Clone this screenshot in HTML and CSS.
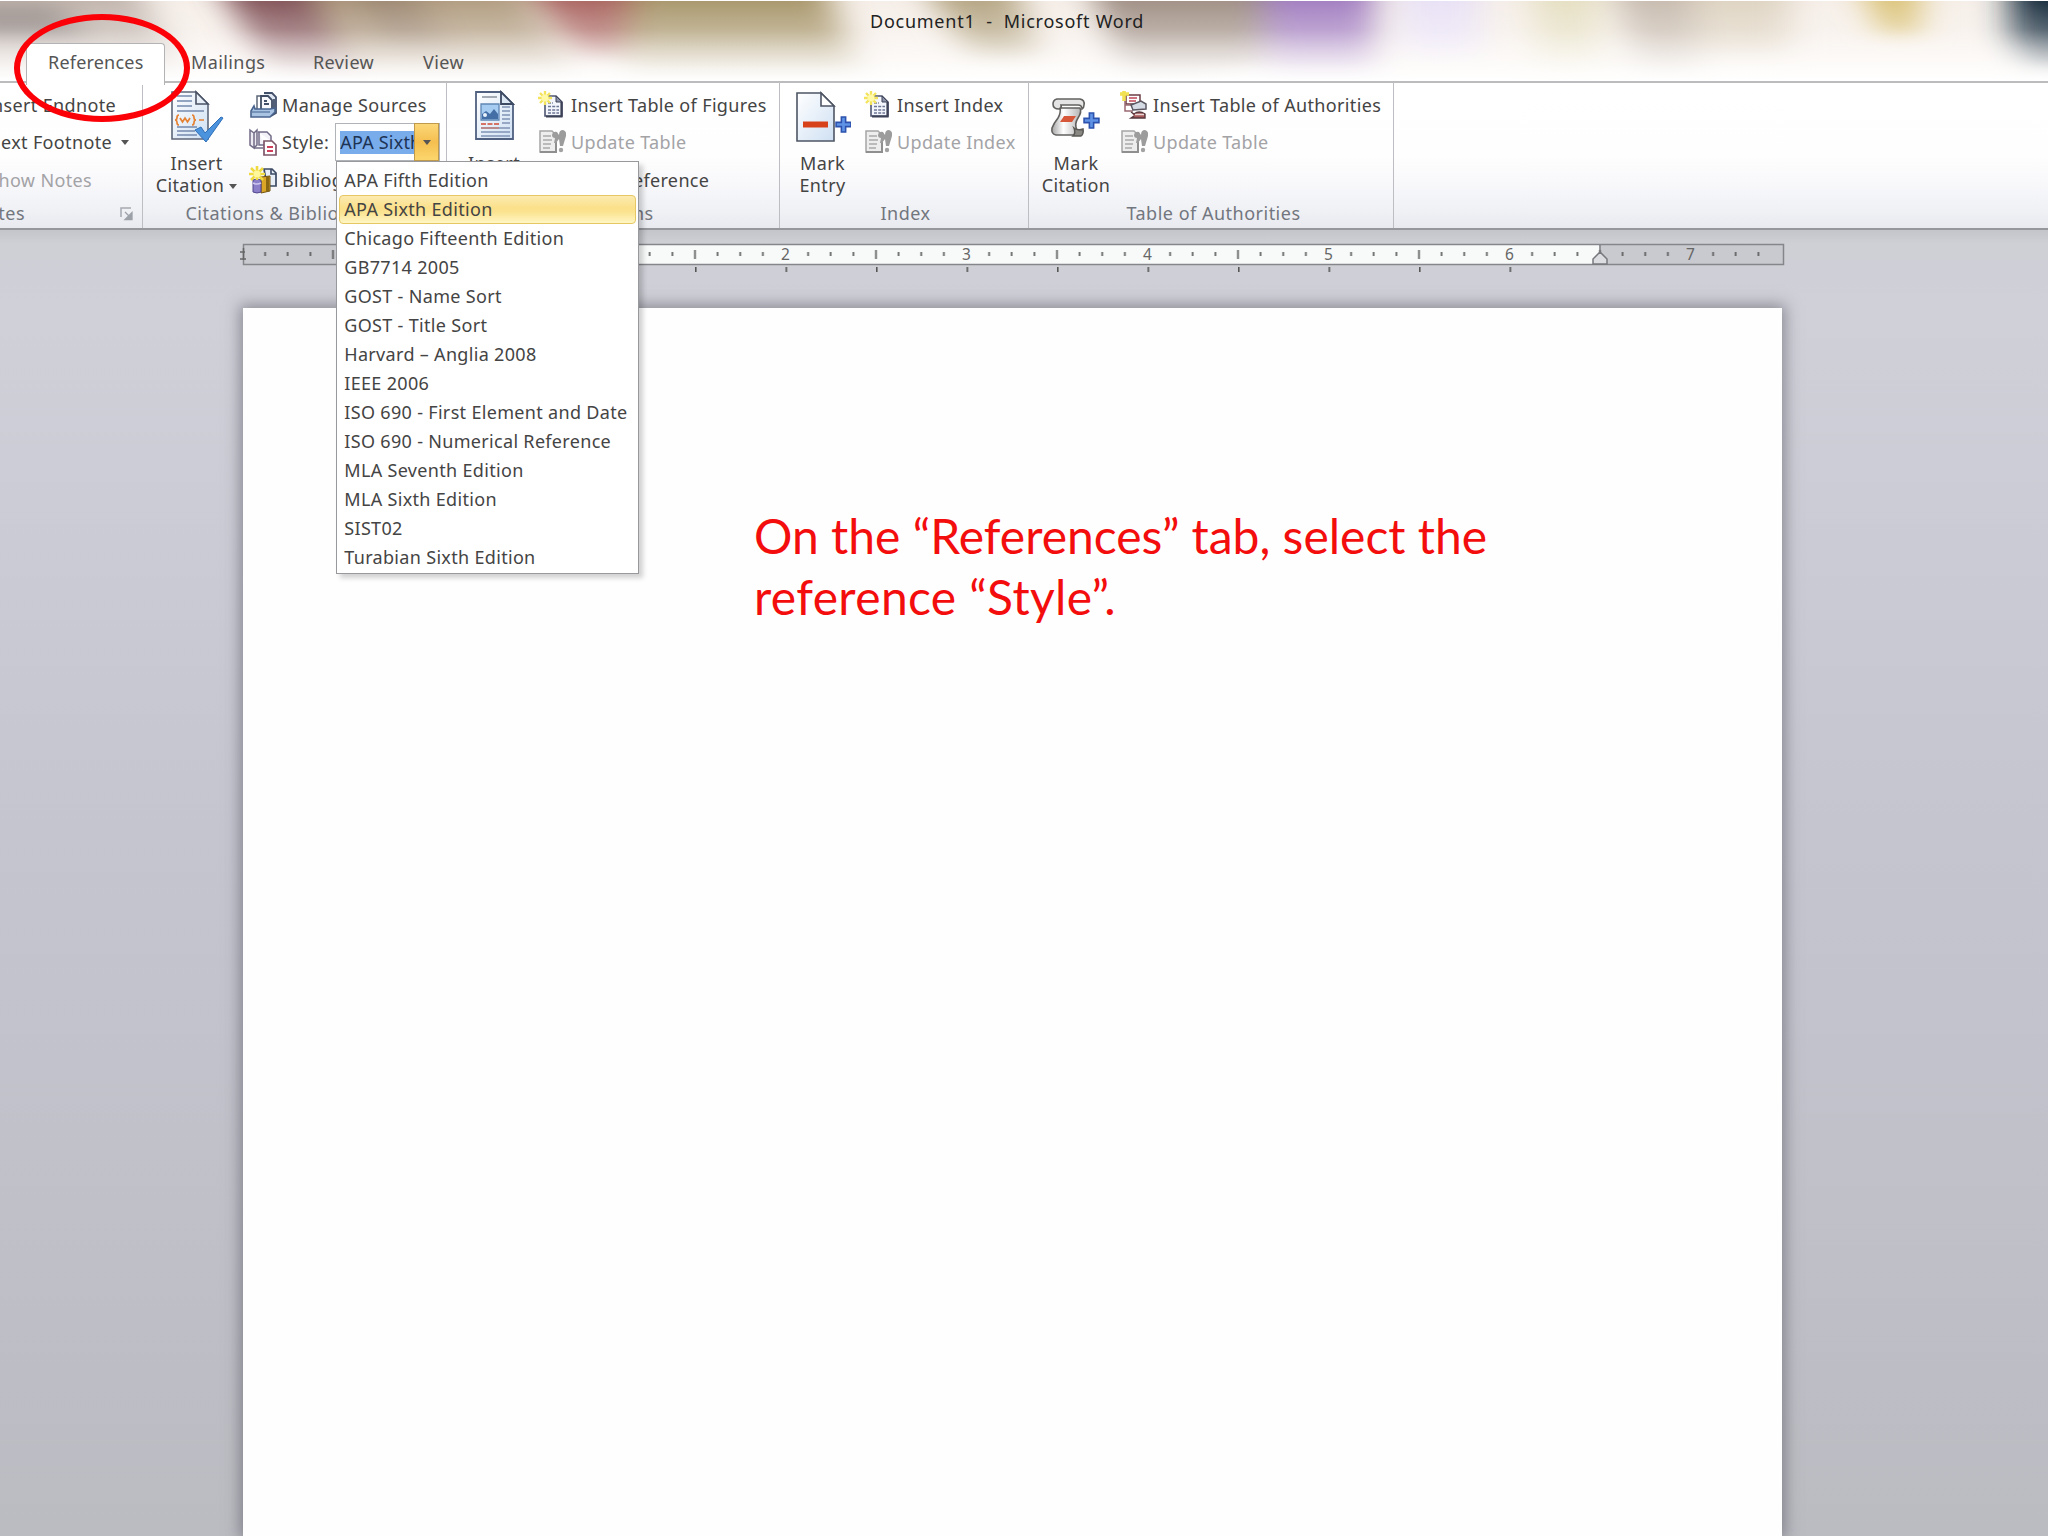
FILE: index.html
```
<!DOCTYPE html>
<html lang="en">

<head>
  <meta charset="UTF-8" />
  <title>Document1 - Microsoft Word</title>
  <link rel="stylesheet" href="styles.css">
</head>

<body>
  <!-- shared icons -->
  <svg class="defs" width="0" height="0">
    <linearGradient id="paper" x1="0" y1="0" x2="1" y2="1">
      <stop offset="0" stop-color="#ffffff" />
      <stop offset="1" stop-color="#cfe0f3" />
    </linearGradient>
    <linearGradient id="grey" x1="0" y1="0" x2="1" y2="0">
      <stop offset="0" stop-color="#a5a5a5" />
      <stop offset="0.4" stop-color="#ffffff" />
      <stop offset="1" stop-color="#b4b4b4" />
    </linearGradient>
    <symbol id="new-table" viewBox="0 0 28 28">
      <path d="M7 5h11l6 6v14H7z" fill="#f3f6fc" stroke="#4f5672" stroke-width="1.6" />
      <path d="M23.5 11v14.5H8" fill="none" stroke="#3d4257" stroke-width="2.2" />
      <path d="M18 5v6h6z" fill="#8d93ab" stroke="#3d4257" />
      <path d="M10 12h5M10 15.5h11M10 19h11M10 22h11" stroke="#6d7796" stroke-width="1.5" stroke-dasharray="3 1.2" />
      <path d="M7 0v14M0 7h14M2 2l10 10M12 2L2 12" stroke="#f3e45c" stroke-width="2.4" />
      <circle cx="7" cy="7" r="3.5" fill="#fff9a8" />
    </symbol>
    <symbol id="update" viewBox="0 0 28 28">
      <path d="M2 3h12l4 4v17H2z" fill="#ededed" stroke="#a5a5a5" stroke-width="1.5" />
      <path d="M2 24h16V9" fill="none" stroke="#8f8f8f" stroke-width="2" />
      <path d="M5 8h8M5 12h9M5 16h8M5 20h7" stroke="#a9a9a9" stroke-width="1.6" />
      <path d="M14 7q1-4 5-3l2 3q0-5 4-5 4 1 3 6l-3 10h-3l-1-7-3 4h-2l1-5q-3 0-3-3z" fill="#9c9c9c" />
      <circle cx="23" cy="22" r="2.200" fill="#a2a2a2" />
    </symbol>
    <symbol id="plus" viewBox="0 0 16 16">
      <path d="M6 1h4v5h5v4h-5v5H6v-5H1V6h5z" fill="#5f93e6" stroke="#2d52ad" stroke-width="1.500" />
    </symbol>
  </svg>

  <div class="titlebar">
    <!-- blurred glass behind the title -->
    <svg class="glass" viewBox="0 0 2048 81" preserveAspectRatio="none">
      <defs>
        <filter id="soft" x="-5%" y="-50%" width="110%" height="200%">
          <feGaussianBlur stdDeviation="17 9" />
        </filter>
        <linearGradient id="fade" x1="0" y1="0" x2="0" y2="1">
          <stop offset="0" stop-color="#fff" stop-opacity="0" />
          <stop offset="0.35" stop-color="#fffdfc" stop-opacity="0.25" />
          <stop offset="0.6" stop-color="#fffdfc" stop-opacity="0.6" />
          <stop offset="0.85" stop-color="#fffefd" stop-opacity="0.9" />
          <stop offset="1" stop-color="#fff" stop-opacity="1" />
        </linearGradient>
      </defs>
      <rect width="2048" height="81" fill="#f6efe9" />
      <g filter="url(#soft)">
        <path d="M-40-30H130L190 90H-40z" fill="#c4b8b0" />
        <path d="M-40 5H60L90 40H-40z" fill="#958b87" />
        <path d="M210-30H320L380 110H290z" fill="#875a5f" />
        <path d="M305-30H510L590 100H370z" fill="#b39f83" />
        <path d="M340-30H400L450 50H380z" fill="#a08b76" />
        <path d="M515-30H650L690 60H580z" fill="#ad6b66" />
        <path d="M635-30H820L870 100H620z" fill="#ab9a70" />
        <path d="M915-30H1010L1040 60H970z" fill="#b8a988" />
        <path d="M1085-30H1265V70L1130 100z" fill="#a39388" />
        <path d="M1262-30H1375V90H1270z" fill="#a582c2" />
        <path d="M1400-30H1480V60H1400z" fill="#e9e2f6" />
        <path d="M1530-30H1600V90H1540z" fill="#e6e0c4" />
        <path d="M1610-30H1700V90H1640z" fill="#c9bdb1" />
        <path d="M1690-30H1790V60H1700z" fill="#e0d5c4" />
        <path d="M1855-30H1920V35H1880z" fill="#dcc47a" />
        <path d="M2010-30H2110V75H2030L2010 35z" fill="#1d3342" />
      </g>
      <rect width="2048" height="81" fill="url(#fade)" />
    </svg>
    <div class="window-title">Document1&nbsp; -&nbsp; Microsoft Word</div>
    <div class="tabs">
      <div class="tab active">References</div>
      <div class="tab mailings">Mailings</div>
      <div class="tab review">Review</div>
      <div class="tab">View</div>
    </div>
  </div>

  <div class="ribbon">
    <div class="group footnotes">
      <div class="group-body">
        <div class="commands">
          <div class="command">Insert Endnote</div>
          <div class="command next">Next Footnote <i class="arrow"></i></div>
          <div class="command show disabled">Show Notes</div>
        </div>
      </div>
      <div class="group-label">
        <span>Footnotes</span>
        <svg width="14" height="14" viewBox="0 0 14 14">
          <path d="M1 10V1h10" fill="none" stroke="#a6a9b0" stroke-width="1.500" />
          <path d="M5 5l5 5M12 5.500v7H5z" fill="#9da1a8" stroke="#9da1a8" stroke-width="1.300" />
        </svg>
      </div>
    </div>

    <div class="group citations">
      <div class="group-body">
        <div class="big">
          <svg width="54" height="54" viewBox="0 0 54 54">
            <path d="M2 2h24l12 12v35H2z" fill="url(#paper)" stroke="#5d6678" stroke-width="1.600" />
            <path d="M26 2v12h12z" fill="#e9f0f8" stroke="#4a5366" stroke-width="1.600" />
            <path d="M7 6h15M7 11h15M7 16h15M7 21h27M7 37h20M7 41h18M7 45h20" stroke="#7489ad" stroke-width="1.500" />
            <path d="M9 25q-2 0-2 2.500t-2 2.500q2 0 2 2.500t2 2.500M22 25q2 0 2 2.500t2 2.500q-2 0-2 2.500t-2 2.500M10 28l2.500 4 2.500-4 2.500 4 2.500-4M29 30h5" fill="none" stroke="#e58234" stroke-width="1.700" />
            <path d="M25 40l6-3 4 6L51 27l2 1-17 24z" fill="#4b93dd" stroke="#2f6fb8" />
          </svg>
          <span>Insert<br>Citation <i class="arrow"></i></span>
        </div>
        <div class="commands">
          <div class="command">
            <svg width="28" height="28" viewBox="0 0 28 28">
              <path d="M8 5h6l3 3v12H8z" fill="#fff" stroke="#5c6578" stroke-width="1.500" />
              <path d="M15 2h8l4 4v16l-5 3" fill="#dfe7f2" stroke="#43506a" stroke-width="1.800" />
              <path d="M12 5h7l4 4v13H12z" fill="#f7f9fd" stroke="#3f4c63" stroke-width="1.800" />
              <path d="M15 10h3M15 13h5M25 8v13" stroke="#43506a" stroke-width="1.800" />
              <path d="M5 15l-3 5v6h19l5-5v-4l-5 1H6z" fill="#a9c3e2" stroke="#48648e" stroke-width="1.600" />
              <path d="M3 21h18" stroke="#6582ab" stroke-width="1.500" />
            </svg>
            Manage Sources
          </div>
          <div class="command style">
            <svg width="28" height="28" viewBox="0 0 28 28">
              <path d="M1 2l4 3v15l-4-3zM5 5l3-3v15l-3 3" fill="#eceaf2" stroke="#716b86" stroke-width="1.500" />
              <path d="M9 4h9l4 4v5M5 20h9M10 4v13h5" fill="#f3f1f8" stroke="#716b86" stroke-width="1.500" />
              <path d="M15 13h8l4 4v10H15z" fill="#fff" stroke="#7e5569" stroke-width="1.700" />
              <path d="M18 19h6M18 23h6" stroke="#d0405c" stroke-width="1.800" />
            </svg>
            Style:
            <div class="combo">
              <span class="value">APA Sixth</span>
              <span class="drop"><i class="arrow"></i></span>
              <div class="menu">
                <div class="item">APA Fifth Edition</div>
                <div class="item selected">APA Sixth Edition</div>
                <div class="item">Chicago Fifteenth Edition</div>
                <div class="item">GB7714 2005</div>
                <div class="item">GOST - Name Sort</div>
                <div class="item">GOST - Title Sort</div>
                <div class="item">Harvard – Anglia 2008</div>
                <div class="item">IEEE 2006</div>
                <div class="item">ISO 690 - First Element and Date</div>
                <div class="item">ISO 690 - Numerical Reference</div>
                <div class="item">MLA Seventh Edition</div>
                <div class="item">MLA Sixth Edition</div>
                <div class="item">SIST02</div>
                <div class="item">Turabian Sixth Edition</div>
              </div>
            </div>
          </div>
          <div class="command">
            <svg width="28" height="28" viewBox="0 0 28 28">
              <path d="M15 3h8l4 4v13h-9z" fill="#e9eff8" stroke="#3b4963" stroke-width="1.700" />
              <path d="M22 3v5h5" fill="none" stroke="#3b4963" stroke-width="1.600" />
              <path d="M12 11l9-1v15l-9 2z" fill="#dba526" stroke="#6e5312" />
              <path d="M17 11l3-1v15l-3 1z" fill="#8a6712" />
              <path d="M4 14q4-2 8 0v12q-4 2-8 0z" fill="#8b7fc9" stroke="#51468c" />
              <path d="M4 17q4 2 8 0" fill="none" stroke="#cfc8ef" stroke-width="1.500" />
              <path d="M8 0v14M0 8h16M2 2l12 12M14 2L2 14" stroke="#efdb3f" stroke-width="2.600" />
              <circle cx="8" cy="8" r="3.500" fill="#fff79a" />
            </svg>
            Bibliography
          </div>
        </div>
      </div>
      <div class="group-label">Citations &amp; Bibliography</div>
    </div>

    <div class="group captions">
      <div class="group-body">
        <div class="big">
          <svg width="42" height="54" viewBox="0 0 42 54">
            <path d="M3 2h25l12 12v35H3z" fill="url(#paper)" stroke="#4f6080" stroke-width="1.800" />
            <path d="M28 2v12h12z" fill="#dde8f5" stroke="#3c4a63" stroke-width="1.800" />
            <path d="M9 7h15" stroke="#8a919d" stroke-width="1.500" />
            <path d="M8 14h18v16H8z" fill="#a7ccf2" stroke="#6086b4" stroke-width="1.300" />
            <path d="M9 29v-5l4-3 4 3 4-5 4 5v5z" fill="#436ea6" />
            <circle cx="12" cy="25" r="2" fill="#e9f3fd" />
            <path d="M29 17h8M29 21h8M29 25h8M29 29h8M29 33h8M8 38h29M8 42h29M8 46h29" stroke="#7f93b4" stroke-width="1.500" />
            <path d="M8 34h18" stroke="#cf4b35" stroke-width="1.700" stroke-dasharray="5 1.500" />
            <path d="M8 38h18" stroke="#cc7a6c" stroke-width="1.300" />
          </svg>
          <span>Insert<br>Caption</span>
        </div>
        <div class="commands">
          <div class="command"><svg width="28" height="28"><use href="#new-table" /></svg>Insert Table of Figures</div>
          <div class="command disabled"><svg width="28" height="28"><use href="#update" /></svg>Update Table</div>
          <div class="command cross"><svg width="28" height="28"></svg>Cross-reference</div>
        </div>
      </div>
      <div class="group-label">Captions</div>
    </div>

    <div class="group index">
      <div class="group-body">
        <div class="big">
          <svg width="56" height="54" viewBox="0 0 56 54">
            <path d="M2 3h24l13 13v35H2z" fill="url(#paper)" stroke="#4e5564" stroke-width="1.600" />
            <path d="M26 3v13h13z" fill="#fff" stroke="#4e5564" stroke-width="1.600" />
            <path d="M8 31.500h25v6H8z" fill="#d8421a" />
            <use href="#plus" x="40" y="26" width="17" height="17" />
          </svg>
          <span>Mark<br>Entry</span>
        </div>
        <div class="commands">
          <div class="command"><svg width="28" height="28"><use href="#new-table" /></svg>Insert Index</div>
          <div class="command disabled"><svg width="28" height="28"><use href="#update" /></svg>Update Index</div>
        </div>
      </div>
      <div class="group-label">Index</div>
    </div>

    <div class="group authorities">
      <div class="group-body">
        <div class="big">
          <svg width="54" height="54" viewBox="0 0 54 54">
            <path d="M11 18h20q2 4-2 10-4 6-1 12 1 4-2 5H7q-5-1-4-7 2-5 6-10 3-5 2-10z" fill="url(#grey)" stroke="#62615f" stroke-width="1.600" />
            <path d="M8 9h23q5 1 4 6 0 3-2 4 0-4-4-4H12q1 3-2 4-6 0-6-5 0-4 4-5z" fill="#e4e4e4" stroke="#62615f" stroke-width="1.600" />
            <path d="M25 38q4 3 9 1 1 5-2 7H24q3-3 1-8z" fill="#8a8883" stroke="#5a5955" stroke-width="1.500" />
            <path d="M15 26h12l-4 6H11z" fill="#d6573a" />
            <use href="#plus" x="34" y="22" width="17" height="17" />
          </svg>
          <span>Mark<br>Citation</span>
        </div>
        <div class="commands">
          <div class="command">
            <svg width="28" height="28" viewBox="0 0 28 28">
              <path d="M6 4h14v9H6z" fill="#fff" stroke="#6d3c46" stroke-width="1.500" />
              <path d="M9 7h8M9 10h7" stroke="#c04557" stroke-width="1.500" />
              <path d="M5 6v14h8M5 14h6" fill="none" stroke="#9a6a72" stroke-width="1.500" />
              <path d="M11 14l10-4 5 3v5l-13 1z" fill="#d5dbe4" stroke="#5a5763" stroke-width="1.500" />
              <path d="M11 21l3 2q5-4 11 0v4H11l3-2" fill="#a95a5c" stroke="#57383d" stroke-width="1.400" />
              <path d="M15 23.500h9" stroke="#e9d8d6" stroke-width="1.500" />
              <path d="M4 0v10M0 3h9" stroke="#f0e052" stroke-width="3.500" />
            </svg>
            Insert Table of Authorities
          </div>
          <div class="command disabled"><svg width="28" height="28"><use href="#update" /></svg>Update Table</div>
        </div>
      </div>
      <div class="group-label">Table of Authorities</div>
    </div>
  </div>

  <div class="workspace">
    <svg class="ruler" width="1545" height="32" viewBox="240 242 1545 32">
      <defs>
        <!-- one inch, starting on a numbered mark -->
        <pattern id="inch" x="423.500" y="244" width="181" height="20" patternUnits="userSpaceOnUse">
          <path d="M22.600 8v4M45.200 8v4M67.900 8v4M90.500 6v9M113.100 8v4M135.700 8v4M158.400 8v4" stroke="#555" stroke-width="1.600" />
        </pattern>
        <pattern id="stops" x="423.500" y="266" width="90.500" height="8" patternUnits="userSpaceOnUse">
          <path d="M0.800 1v5" stroke="#555" stroke-width="1.600" />
        </pattern>
      </defs>
      <rect x="243.500" y="244.500" width="1540" height="20" fill="#c9cacf" />
      <rect x="423.500" y="244.500" width="1177" height="20" fill="#f8fafa" />
      <rect x="243.500" y="244.500" width="1540" height="20" fill="none" stroke="#85868b" stroke-width="1.500" />
      <rect x="246" y="244" width="1522" height="20" fill="url(#inch)" />
      <rect x="423" y="266" width="1100" height="8" fill="url(#stops)" />
      <path d="M243.500 248v12M240 252h5M240 259h6" stroke="#666" stroke-width="1.500" />
      <g class="numbers">
        <text x="604.500" y="260">1</text>
        <text x="785.500" y="260">2</text>
        <text x="966.500" y="260">3</text>
        <text x="1147.500" y="260">4</text>
        <text x="1328.500" y="260">5</text>
        <text x="1509.500" y="260">6</text>
        <text x="1690.500" y="260">7</text>
      </g>
      <path d="M1600 245v7l-7 7v5h14v-5l-7-7" fill="#dcdde0" stroke="#77787d" stroke-width="1.500" />
    </svg>
    <div class="page">
      <p class="note">On the “References” tab, select the<br><span>reference “Style”.</span></p>
    </div>
  </div>

  <div class="circle"></div>
</body>

</html>
```
FILE: styles.css
```
* {
  box-sizing: border-box;
}

body {
  margin: 0;
  width: 2048px;
  height: 1536px;
  overflow: hidden;
  position: relative;
  display: flex;
  flex-direction: column;
  font-family: "Noto Sans", "Open Sans", sans-serif;
  font-size: 18px;
  letter-spacing: 0.35px;
  color: #444;
}

.defs {
  position: absolute;
}

/* title bar and tabs */
.titlebar {
  position: relative;
  height: 83px;
  flex: none;
  border-top: 1px solid #fff;
  border-bottom: 2px solid #bcbcbe;
}

.glass {
  position: absolute;
  left: 0;
  top: 0;
  width: 100%;
  height: 80px;
}

.window-title {
  position: relative;
  height: 42px;
  line-height: 40px;
  padding-left: 870px;
  letter-spacing: 0.75px;
  color: #222;
}

.tabs {
  position: relative;
  display: flex;
  height: 40px;
  padding-left: 26px;
}

.tab {
  line-height: 38px;
  color: #555;
  letter-spacing: 0.4px;
}

.tab.active {
  width: 139px;
  padding-left: 21px;
  line-height: 37px;
  letter-spacing: 0.2px;
  background: #fff;
  border: 1px solid #b3b3b6;
  border-bottom: none;
  border-radius: 4px 4px 0 0;
  margin-bottom: -2px;
}

.tab.mailings {
  width: 148px;
  padding-left: 26px;
}

.tab.review {
  width: 110px;
}

/* ribbon */
.ribbon {
  display: flex;
  flex: none;
  height: 147px;
  background: linear-gradient(#fff 0%, #fefefe 50%, #f8f8fb 70%, #eff1f5 88%, #e9eaf0 100%);
  border-bottom: 2px solid #96979d;
}

.group {
  display: flex;
  flex-direction: column;
  border-right: 1px solid #bcbec4;
  padding-top: 3px;
}

.footnotes { width: 143px; }
.citations { width: 304px; padding-left: 8px; }
.captions { width: 333px; padding-left: 3px; }
.index { width: 249px; padding-left: 3px; }
.authorities { width: 365px; padding-left: 5px; }

.group-body {
  display: flex;
  height: 114px;
}

.group-label {
  height: 29px;
  line-height: 29px;
  text-align: center;
  letter-spacing: 0.5px;
  color: #72767e;
}

.citations .group-label {
  padding-right: 10px;
}

.big {
  display: flex;
  flex-direction: column;
  align-items: center;
  padding-top: 4px;
  line-height: 22px;
  text-align: center;
}

.big svg {
  margin-bottom: 8px;
}

.citations .big { width: 98px; padding-right: 7px; white-space: nowrap; }
.captions .big { width: 88px; }
.index .big { width: 81px; padding-right: 2px; }
.authorities .big { width: 86px; padding-right: 2px; }

.commands {
  display: flex;
  flex-direction: column;
}

.command {
  display: flex;
  align-items: center;
  height: 37.5px;
  white-space: nowrap;
}

.command svg {
  margin-right: 5px;
}

.disabled {
  color: #a3a3a6;
}

.arrow {
  display: inline-block;
  border: 4.5px solid transparent;
  border-top: 5px solid #555;
  border-bottom: none;
  vertical-align: 3px;
}

/* first group runs off the left edge */
.footnotes .commands {
  width: 130px;
  overflow: hidden;
}

.footnotes .command {
  justify-content: flex-end;
  padding-right: 14px;
}

.footnotes .next {
  padding-right: 1px;
  gap: 9px;
}

.footnotes .show {
  padding-right: 38px;
}

.footnotes .group-label {
  display: flex;
  align-items: center;
  justify-content: space-between;
  padding-right: 8px;
}

.footnotes .group-label span {
  display: flex;
  justify-content: flex-end;
  width: 25px;
  overflow: hidden;
}

/* style box */
.combo {
  position: relative;
  display: flex;
  align-items: center;
  width: 105px;
  height: 38px;
  margin-left: 6px;
  padding-left: 4px;
  background: #fff;
  border: 1px solid #b0b3b8;
}

.value {
  width: 74px;
  height: 23px;
  line-height: 23px;
  overflow: hidden;
  background: #79aceb;
  color: #1d3354;
  letter-spacing: 0.2px;
}

.drop {
  display: flex;
  align-items: center;
  justify-content: center;
  width: 25px;
  height: 38px;
  flex: none;
  background: linear-gradient(#fbd778, #f5bf50 50%, #fbd66d);
  border: 1px solid #c09a4c;
}

.menu {
  position: absolute;
  left: 0;
  top: 37px;
  width: 303px;
  height: 413px;
  padding: 4px 2px 0;
  background: #fff;
  border: 1px solid #98999c;
  box-shadow: 4px 4px 5px rgba(0, 0, 0, 0.18);
  z-index: 2;
}

.item {
  height: 29px;
  line-height: 29px;
  padding-left: 5px;
  letter-spacing: 0.32px;
}

.item.selected {
  padding-left: 4px;
  background: linear-gradient(#fcebb0, #fbe08a 45%, #fbe391 60%, #fff6c4);
  border: 1px solid #e5c763;
  border-radius: 4px;
  line-height: 27px;
}

/* document area */
.workspace {
  display: flex;
  flex-direction: column;
  flex: 1;
  padding: 12px 0 0 240px;
  background: linear-gradient(#c4c5ca 0, #cfd0d6 14px, #cfd0d8 80px, #c4c5cf 600px, #bbbcc2 100%);
}

.ruler {
  flex: none;
}

.numbers {
  font-size: 15.5px;
  letter-spacing: 0;
  fill: #666;
  text-anchor: middle;
}

.page {
  width: 1539px;
  flex: 1;
  margin: 34px 0 0 3px;
  padding: 197px 0 0 511px;
  background: #fefefe;
  box-shadow: 0 0 14px 3px rgba(70, 70, 80, 0.5);
}

.note {
  margin: 0;
  font-family: Lato, sans-serif;
  font-size: 48px;
  line-height: 61px;
  letter-spacing: 0;
  color: #f30d0d;
}

.note span {
  letter-spacing: 0.35px;
}

/* marker ring over the References tab */
.circle {
  position: absolute;
  left: 14px;
  top: 14px;
  width: 176px;
  height: 108px;
  border: 6px solid #fb0007;
  border-radius: 50%;
  z-index: 3;
}
```
